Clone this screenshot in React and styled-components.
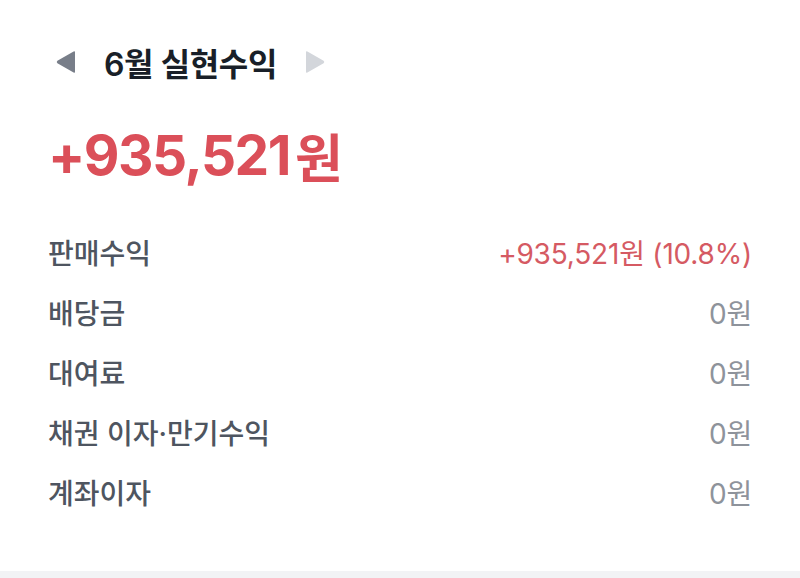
import React from "react";
import styled, { createGlobalStyle } from "styled-components";

const Global = createGlobalStyle`
  html, body { margin: 0; padding: 0; background: #ffffff; }
  body { font-family: Inter, "Noto Sans CJK KR", sans-serif; }
`;

const Page = styled.div`
  width: 800px;
  height: 578px;
  display: flex;
  flex-direction: column;
  background: #ffffff;
`;

const Content = styled.div`
  flex: 1;
  padding: 38px 48px 0 48px;
  display: flex;
  flex-direction: column;
`;

const Header = styled.div`
  display: flex;
  align-items: center;
  height: 48px;
  margin-left: 6px;
`;

const ArrowButton = styled.div`
  width: 24px;
  height: 24px;
  display: flex;
  align-items: center;
  justify-content: center;
  color: ${(p) => (p.$disabled ? "#d3d6db" : "#787e89")};
`;

const Title = styled.div`
  font-size: 32px;
  font-weight: 600;
  color: #191f28;
  margin: 0 26px;
  letter-spacing: -0.4px;
`;

const Amount = styled.div`
  margin-top: 34px;
  height: 70px;
  display: flex;
  align-items: center;
  font-size: 55px;
  font-weight: 700;
  color: #db4f59;
  letter-spacing: -1.5px;
`;

const Unit = styled.span`
  font-size: 52px;
  margin-left: 5px;
  letter-spacing: 0;
`;

const List = styled.div`
  margin-top: 32px;
  display: flex;
  flex-direction: column;
`;

const Row = styled.div`
  display: flex;
  justify-content: space-between;
  align-items: center;
  height: 60px;
  font-size: 28px;
`;

const Label = styled.span`
  color: #4e5560;
  font-weight: 500;
`;

const Value = styled.span`
  color: ${(p) => (p.$positive ? "#d55a63" : "#8e939b")};
  font-weight: 400;
  letter-spacing: -0.2px;
`;

const Footer = styled.div`
  height: 7px;
  background: #f2f3f5;
`;

const Tri = ({ dir }) => (
  <svg width="24" height="24" viewBox="0 0 24 24">
    {dir === "left" ? (
      <path d="M21 2.2 L21 21.8 Q21 23.4 19.6 22.5 L3.4 13.3 Q2 12 3.4 10.7 L19.6 1.5 Q21 0.6 21 2.2 Z" fill="currentColor" />
    ) : (
      <path d="M3 2.2 L3 21.8 Q3 23.4 4.4 22.5 L20.6 13.3 Q22 12 20.6 10.7 L4.4 1.5 Q3 0.6 3 2.2 Z" fill="currentColor" />
    )}
  </svg>
);

const rows = [
  { label: "판매수익", value: "+935,521원 (10.8%)", positive: true },
  { label: "배당금", value: "0원" },
  { label: "대여료", value: "0원" },
  { label: "채권 이자·만기수익", value: "0원" },
  { label: "계좌이자", value: "0원" },
];

export default function App() {
  return (
    <Page>
      <Global />
      <Content>
        <Header>
          <ArrowButton>
            <Tri dir="left" />
          </ArrowButton>
          <Title>6월 실현수익</Title>
          <ArrowButton $disabled>
            <Tri dir="right" />
          </ArrowButton>
        </Header>
        <Amount>
          +935,521<Unit>원</Unit>
        </Amount>
        <List>
          {rows.map((r) => (
            <Row key={r.label}>
              <Label>{r.label}</Label>
              <Value $positive={r.positive}>{r.value}</Value>
            </Row>
          ))}
        </List>
      </Content>
      <Footer />
    </Page>
  );
}
